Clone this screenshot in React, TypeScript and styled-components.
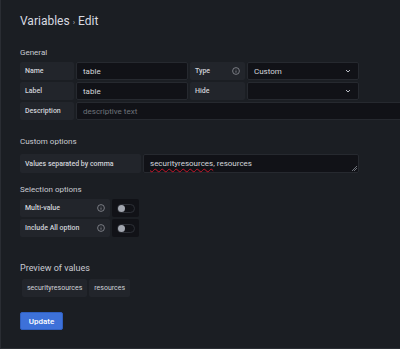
import styled, { createGlobalStyle } from 'styled-components';

const Global = createGlobalStyle`
  html, body { margin: 0; padding: 0; }
  body {
    background: #1b1e23;
    font-family: Roboto, "Liberation Sans", sans-serif;
    color: #ccccdc;
  }
`
const Page = styled.div`
  width: 400px;
  height: 349px;
  box-sizing: border-box;
  border-left: 1px solid #2a2d33;
  border-bottom: 1px solid #2a2d33;
  background: #1b1e23;
  padding: 13px 0 0 19px;
  overflow: hidden;
`
const Title = styled.h1`
  margin: 0;
  font-size: 12px;
  font-weight: 400;
  color: #d8dae0;
  line-height: 17px;
  span { font-size: 8px; margin: 0 3px; color: #b0b4bc; }
`
const Section = styled.h3<{ $top: number; $bottom: number; $size?: number }>`
  margin: ${p => p.$top}px 0 ${p => p.$bottom}px;
  font-size: ${p => p.$size || 8}px;
  font-weight: 400;
  color: #c9cbd2;
  line-height: 11px;
`
const Row = styled.div<{ $h?: number }>`
  display: flex;
  gap: 2px;
  margin-bottom: 2px;
  height: ${p => p.$h || 18}px;
`
const Label = styled.div<{ $w: number }>`
  width: ${p => p.$w}px;
  flex-shrink: 0;
  background: #22252b;
  border-radius: 2px;
  display: flex;
  align-items: center;
  justify-content: space-between;
  padding: 0 5px;
  box-sizing: border-box;
  font-size: 7px;
  font-weight: 500;
  color: #d0d2d8;
`
const Input = styled.div<{ $w?: number; $placeholder?: boolean }>`
  width: ${p => (p.$w ? `${p.$w}px` : 'auto')};
  flex: ${p => (p.$w ? '0 0 auto' : '1')};
  margin-right: ${p => (p.$w ? '0' : '-6px')};
  background: #111217;
  border: 1px solid #26292f;
  border-radius: 2px;
  box-sizing: border-box;
  display: flex;
  align-items: center;
  justify-content: space-between;
  padding: 0 7px 0 6px;
  font-size: 8px;
  color: ${p => (p.$placeholder ? '#6e727a' : '#d4d6dc')};
  position: relative;
`
const Chevron = () => (
  <svg width="6" height="4" viewBox="0 0 6 4"><path d="M1 1l2 2 2-2" stroke="#b8bcc4" strokeWidth="1" fill="none" /></svg>
)
const Info = () => (
  <svg width="8" height="8" viewBox="0 0 8 8">
    <circle cx="4" cy="4" r="3.4" stroke="#8e9198" strokeWidth="0.8" fill="none" />
    <path d="M4 3.5v2.2M4 2.2v.3" stroke="#8e9198" strokeWidth="0.8" />
  </svg>
)
const Spell = styled.span`
  text-decoration: underline wavy #c4162a;
  text-decoration-thickness: 1px;
  text-underline-offset: 2px;
`
const Grip = styled.div`
  position: absolute;
  right: 1px;
  bottom: 1px;
  width: 5px;
  height: 5px;
  background: linear-gradient(135deg, transparent 45%, #6e727a 45%, #6e727a 55%, transparent 55%, transparent 70%, #6e727a 70%, #6e727a 80%, transparent 80%);
`
const SwitchBox = styled.div`
  width: 27px;
  height: 18px;
  background: #111217;
  border-radius: 2px;
  display: flex;
  align-items: center;
  padding-left: 5px;
  box-sizing: border-box;
`
const Track = styled.div`
  width: 18px;
  height: 9px;
  border-radius: 5px;
  border: 1px solid #2c2f36;
  box-sizing: border-box;
  position: relative;
  &::after {
    content: '';
    position: absolute;
    left: 0px;
    top: 0px;
    width: 7px;
    height: 7px;
    border-radius: 50%;
    background: #a3a7b0;
  }
`
const Chips = styled.div`
  display: flex;
  gap: 2px;
  margin-left: 2px;
`
const Chip = styled.div`
  height: 18px;
  padding: 0 5px;
  background: #22252b;
  border-radius: 2px;
  display: flex;
  align-items: center;
  font-size: 7px;
  color: #d0d2d8;
`
const Button = styled.button`
  display: block;
  margin-top: 15px;
  width: 43px;
  height: 18px;
  background: #3d71d9;
  border: 1px solid #2f5fbf;
  border-radius: 2px;
  color: #ffffff;
  font-family: Roboto, "Liberation Sans", sans-serif;
  font-size: 8px;
  font-weight: 500;
  padding: 0;
`

export default function App() {
  return (
    <>
      <Global />
      <Page>
        <Title>Variables<span>›</span>Edit</Title>
        <Section $top={16} $bottom={4}>General</Section>
        <Row>
          <Label $w={54}>Name</Label>
          <Input $w={112}>table</Input>
          <Label $w={55}>Type<Info /></Label>
          <Input $w={112}>Custom<Chevron /></Input>
        </Row>
        <Row>
          <Label $w={54}>Label</Label>
          <Input $w={112}>table</Input>
          <Label $w={55}>Hide</Label>
          <Input $w={112}><span /><Chevron /></Input>
        </Row>
        <Row>
          <Label $w={54}>Description</Label>
          <Input $placeholder>descriptive text</Input>
        </Row>
        <Section $top={16} $bottom={7}>Custom options</Section>
        <Row $h={19}>
          <Label $w={121}>Values separated by comma</Label>
          <Input $w={216}><span><Spell>securityresources</Spell>, resources</span><Grip /></Input>
        </Row>
        <Section $top={11} $bottom={4}>Selection options</Section>
        <Row>
          <Label $w={90}>Multi-value<Info /></Label>
          <SwitchBox><Track /></SwitchBox>
        </Row>
        <Row>
          <Label $w={90}>Include All option<Info /></Label>
          <SwitchBox><Track /></SwitchBox>
        </Row>
        <Section $top={26} $bottom={5} $size={9}>Preview of values</Section>
        <Chips>
          <Chip>securityresources</Chip>
          <Chip>resources</Chip>
        </Chips>
        <Button>Update</Button>
      </Page>
    </>
  )
}
